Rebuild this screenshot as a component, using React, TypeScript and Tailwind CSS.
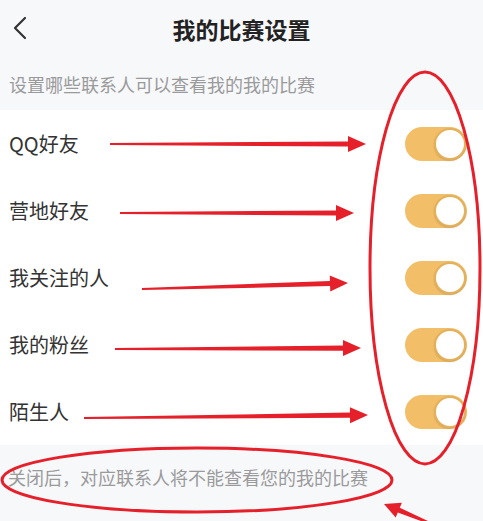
import React from 'react';

const CONTACTS = ['QQ好友', '营地好友', '我关注的人', '我的粉丝', '陌生人'];

type Pt = [number, number];

// tapered arrow: thin tail, thicker shaft near the head
function arrowPoints(from: Pt, to: Pt, head = 18, halfHead = 8) {
  const [x1, y1] = from;
  const [x2, y2] = to;
  const len = Math.hypot(x2 - x1, y2 - y1);
  const ux = (x2 - x1) / len;
  const uy = (y2 - y1) / len;
  const nx = -uy;
  const ny = ux;
  const bx = x2 - ux * head;
  const by = y2 - uy * head;
  const p = (x: number, y: number, w: number) => `${x + nx * w},${y + ny * w}`;
  return [
    p(x1, y1, 1),
    p(bx, by, 2.6),
    p(bx, by, halfHead),
    `${x2},${y2}`,
    p(bx, by, -halfHead),
    p(bx, by, -2.6),
    p(x1, y1, -1),
  ].join(' ');
}

const ARROWS: [Pt, Pt][] = [
  [[110, 144], [366, 144]],
  [[120, 213], [354, 213]],
  [[142, 289], [348, 283]],
  [[115, 349], [361, 348]],
  [[84, 418], [368, 415]],
];

function Toggle() {
  return (
    <div className="flex h-[34px] w-[62px] items-center justify-end rounded-full bg-[#f2bf68] pr-[1px]">
      <div className="h-[32px] w-[32px] rounded-full border-[2px] border-[#e4b05a] bg-white shadow-[0_1px_2px_rgba(0,0,0,0.15)]" />
    </div>
  );
}

function Marks() {
  return (
    <svg className="pointer-events-none absolute inset-0" width="483" height="521" viewBox="0 0 483 521">
      <g fill="#e5202a">
        {ARROWS.map(([a, b], i) => (
          <polygon key={i} points={arrowPoints(a, b)} />
        ))}
        <polygon points={arrowPoints([432, 524], [384, 504], 16, 8)} />
      </g>
      <g fill="none" stroke="#e5202a" strokeWidth="3">
        <ellipse cx="425" cy="268" rx="55" ry="196" />
        <ellipse cx="197" cy="480" rx="195" ry="32" />
      </g>
    </svg>
  );
}

export default function App() {
  return (
    <div
      className="relative h-[521px] w-[483px] overflow-hidden bg-[#f7f8fa]"
      style={{ fontFamily: '"Noto Sans CJK SC", "Noto Sans", sans-serif' }}
    >
      <header className="relative flex h-[58px] items-center justify-center">
        <svg className="absolute left-[12px] top-[16px]" width="16" height="24" viewBox="0 0 16 24">
          <polyline points="13,2 3,12 13,22" fill="none" stroke="#333" strokeWidth="2.2" strokeLinecap="round" strokeLinejoin="round" />
        </svg>
        <h1 className="text-[23px] font-bold leading-none text-[#222]">我的比赛设置</h1>
      </header>

      <div className="flex h-[52px] items-center px-[9px] text-[18px] text-[#9a9a9a]">
        设置哪些联系人可以查看我的我的比赛
      </div>

      <ul className="bg-white">
        {CONTACTS.map((c) => (
          <li key={c} className="flex h-[67px] items-center justify-between pl-[9px] pr-[16px]">
            <span className="text-[20px] text-[#333]">{c}</span>
            <Toggle />
          </li>
        ))}
      </ul>

      <p className="px-[8px] pt-[20px] text-[18px] leading-[24px] text-[#9a9a9a]">
        关闭后，对应联系人将不能查看您的我的比赛
      </p>

      <Marks />
    </div>
  );
}
